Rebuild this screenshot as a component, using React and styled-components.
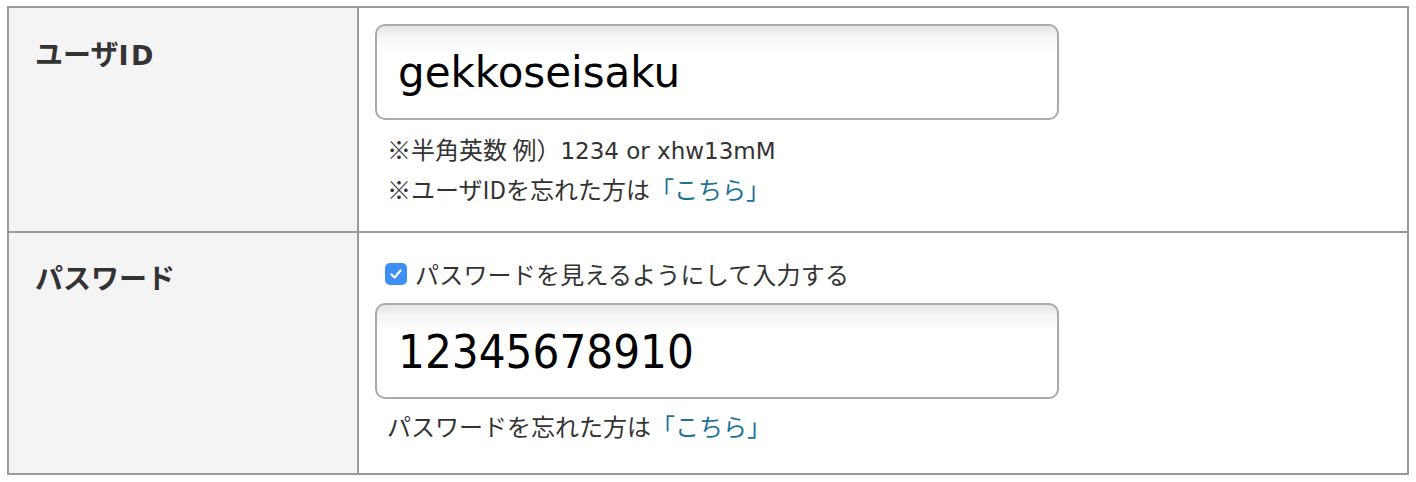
import React from "react";
import styled, { createGlobalStyle } from "styled-components";

const GlobalStyle = createGlobalStyle`
  html, body {
    margin: 0;
    padding: 0;
    background: #ffffff;
  }
  body {
    font-family: "DejaVu Sans", "Noto Sans CJK JP", sans-serif;
    color: #333333;
  }
`;

const Page = styled.div`
  padding: 6px 7px;
`;

const Table = styled.div`
  width: 1402px;
  box-sizing: border-box;
  border: 2px solid #9a9a9a;
`;

const Row = styled.div`
  display: grid;
  grid-template-columns: 350px 1fr;
  border-top: ${(p) => (p.$first ? "none" : "2px solid #9a9a9a")};
`;

const Head = styled.div`
  box-sizing: border-box;
  background: #f4f4f4;
  border-right: 2px solid #9a9a9a;
  padding: ${(p) => p.$pt}px 0 0 26px;
  font-family: "Noto Sans CJK JP", sans-serif;
  font-weight: 700;
  font-size: 28px;
  line-height: 38px;
  color: #333333;
`;

const HeadLatin = styled.span`
  font-family: "DejaVu Sans", sans-serif;
  font-weight: 700;
  font-size: 27px;
  letter-spacing: 2.5px;
`;

const Body = styled.div`
  display: flex;
  flex-direction: column;
  align-items: flex-start;
  padding: ${(p) => p.$pt}px 0 ${(p) => p.$pb}px 16px;
`;

const Field = styled.input`
  box-sizing: border-box;
  width: 684px;
  height: 96px;
  margin: ${(p) => p.$mt || 0}px 0 0 0;
  border: 2px solid #aaaaaa;
  border-radius: 10px;
  background: linear-gradient(to bottom, #e6e6e6 0px, #f6f6f6 12px, #ffffff 26px);
  padding: 0 0 0 21px;
  font-family: ${(p) => p.$font};
  font-size: ${(p) => p.$size}px;
  color: #000000;
  outline: none;
`;

const Notes = styled.div`
  margin-top: ${(p) => p.$mt}px;
  padding-left: 12px;
  font-family: "Noto Sans CJK JP", sans-serif;
  font-size: 24px;
  line-height: 37px;
  color: #333333;
`;

const Latin = styled.span`
  font-family: "DejaVu Sans", sans-serif;
  font-size: 23px;
`;

const Link = styled.a`
  color: #1c7196;
  text-decoration: none;
`;

const CheckRow = styled.label`
  display: flex;
  align-items: center;
  gap: 8px;
  padding-left: 10px;
  height: 37px;
  font-family: "Noto Sans CJK JP", sans-serif;
  font-size: 24px;
  letter-spacing: 0.2px;
  color: #333333;
`;

const Box = styled.span`
  width: 22px;
  height: 22px;
  border-radius: 5px;
  background: #3d8ff6;
  display: flex;
  align-items: center;
  justify-content: center;
  flex: none;
`;

export default function App() {
  return (
    <>
      <GlobalStyle />
      <Page>
        <Table>
          <Row $first>
            <Head $pt={26}>
              ユーザ<HeadLatin>ID</HeadLatin>
            </Head>
            <Body $pt={16} $pb={24}>
              <Field
                type="text"
                defaultValue="gekkoseisaku"
                $font={`"DejaVu Sans", sans-serif`}
                $size={42}
              />
              <Notes $mt={10}>
                <div>
                  ※半角英数 例）<Latin>1234 or xhw13mM</Latin>
                </div>
                <div>
                  ※ユーザIDを忘れた方は<Link href="#">「こちら」</Link>
                </div>
              </Notes>
            </Body>
          </Row>
          <Row>
            <Head $pt={25}>パスワード</Head>
            <Body $pt={22} $pb={29}>
              <CheckRow>
                <Box>
                  <svg width="14" height="14" viewBox="0 0 14 14">
                    <path
                      d="M2.5 7.5 L5.6 10.5 L11.5 3.5"
                      fill="none"
                      stroke="#ffffff"
                      strokeWidth="2.2"
                      strokeLinecap="round"
                      strokeLinejoin="round"
                    />
                  </svg>
                </Box>
                パスワードを見えるようにして入力する
              </CheckRow>
              <Field
                $mt={11}
                type="text"
                defaultValue="12345678910"
                $font={`"DejaVu Sans Condensed", "DejaVu Sans", sans-serif`}
                $size={47}
              />
              <Notes $mt={8}>
                <div>
                  パスワードを忘れた方は<Link href="#">「こちら」</Link>
                </div>
              </Notes>
            </Body>
          </Row>
        </Table>
      </Page>
    </>
  );
}
